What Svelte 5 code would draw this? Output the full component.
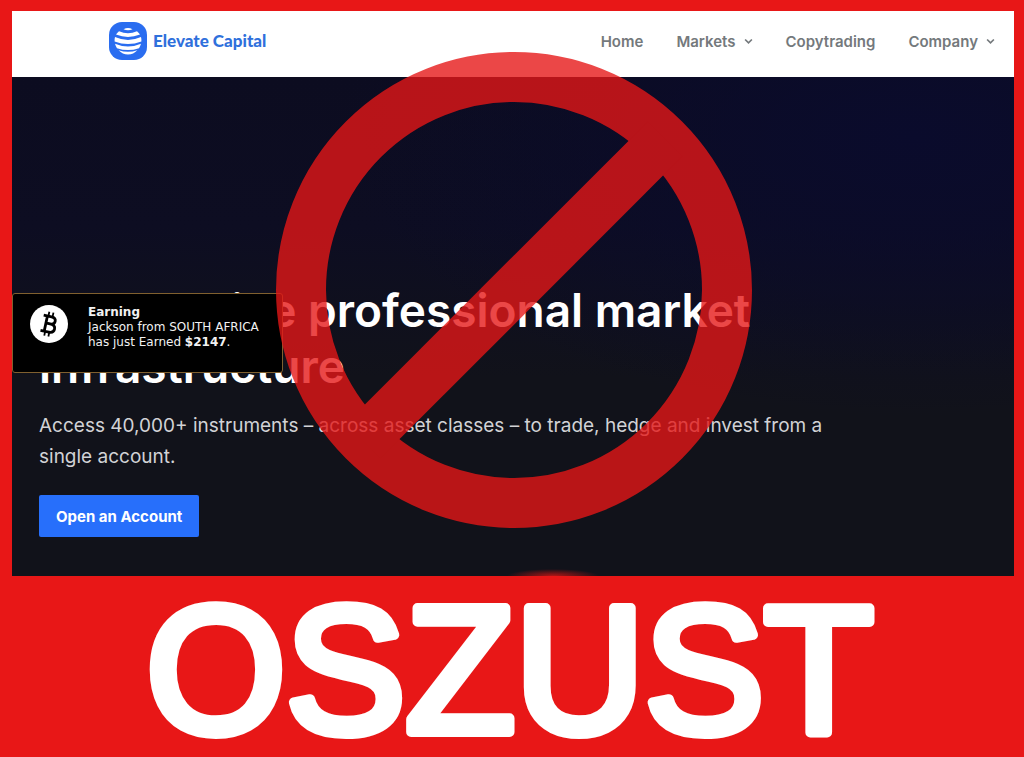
<script lang="ts">
    interface NavItem {
        label: string;
        menu: boolean;
    }

    const navItems: NavItem[] = [
        {label: 'Home', menu: false},
        {label: 'Markets', menu: true},
        {label: 'Copytrading', menu: false},
        {label: 'Company', menu: true}
    ];

    const earning = {name: 'Jackson', country: 'SOUTH AFRICA', amount: '$2147'};
</script>

<main class="poster">
    <div class="site">
        <header>
            <a class="brand" href="#home">
                <svg class="logo" viewBox="0 0 38 38" aria-hidden="true">
                    <rect width="38" height="38" rx="13" fill="#2a6df0"/>
                    <g fill="#fff">
                        <path d="M14.5 7.2 Q19 4.8 23.5 7.2 Q19 9.4 14.5 7.2Z"/>
                        <path d="M10 9.2 Q19 13.4 28 9.2 Q30 10.8 31 12.6 Q19 17.4 7 12.6 Q8 10.8 10 9.2Z"/>
                        <path d="M6 15 Q19 20.8 32 15 Q32.6 17 32.4 19.4 Q19 24.6 5.6 19.4 Q5.4 17 6 15Z"/>
                        <path d="M6 21.8 Q19 27.4 32 21.8 Q31.2 24.6 30 26.2 Q19 30 8 26.2 Q6.8 24.6 6 21.8Z"/>
                        <path d="M9.6 28.2 Q19 31.4 28.4 28.2 Q24.5 32.4 19 32.4 Q13.5 32.4 9.6 28.2Z"/>
                    </g>
                </svg>
                <span>Elevate Capital</span>
            </a>
            <nav>
                {#each navItems as item}
                    <a href="#{item.label.toLowerCase()}">
                        {item.label}
                        {#if item.menu}
                            <svg class="chevron" viewBox="0 0 8 6" aria-hidden="true">
                                <path d="M1 1.2 L4 4.2 L7 1.2" fill="none" stroke="currentColor" stroke-width="1.5"/>
                            </svg>
                        {/if}
                    </a>
                {/each}
            </nav>
        </header>

        <section class="hero">
            <h1>Responsive professional market infrastructure</h1>
            <p>Access 40,000+ instruments – across asset classes – to trade, hedge and invest from a single account.</p>
            <button type="button">Open an Account</button>
        </section>

        <aside class="toast">
            <svg class="coin" viewBox="0 0 38 38" aria-hidden="true">
                <circle cx="19" cy="19" r="19" fill="#fff"/>
                <g transform="rotate(12 19 19)" fill="none" stroke="#000">
                    <path d="M12 11.5 H20 Q24.5 11.5 24.5 15.1 Q24.5 18.7 20 18.7 H15.5 M20 18.7 Q25.5 18.7 25.5 22.8 Q25.5 27 20.5 27 H12 M15.8 11.5 V27" stroke-width="2.8"/>
                    <path d="M16.8 7 V12 M21 7 V12 M16.8 26.4 V31.4 M21 26.4 V31.4" stroke-width="1.8"/>
                </g>
            </svg>
            <div>
                <strong>Earning</strong><br>
                {earning.name} from {earning.country}<br>
                has just Earned <strong>{earning.amount}</strong>.
            </div>
        </aside>

        <svg class="ban" viewBox="0 0 476 476" aria-hidden="true">
            <g fill="none" stroke="#e61717">
                <circle cx="238" cy="238" r="213" stroke-width="50"/>
                <path d="M87 389 L389 87" stroke-width="49"/>
            </g>
        </svg>
    </div>

    <h2>
        <svg viewBox="0 0 1000 181">
            <text x="497" y="156" text-anchor="middle">OSZUST</text>
        </svg>
    </h2>
</main>

<style>
    :global(body) {
        margin: 0;
        background: #e81717;
    }

    .poster {
        box-sizing: border-box;
        min-height: 100vh;
        padding: 11px 10px 0 12px;
        background: #e81717;
        font-family: Inter, "Liberation Sans", sans-serif;
    }

    .site {
        position: relative;
    }

    header {
        display: flex;
        align-items: center;
        justify-content: space-between;
        box-sizing: border-box;
        min-height: 66px;
        padding: 0 19px 6px 97px;
        background: #fff;
    }

    a {
        text-decoration: none;
    }

    .brand {
        display: flex;
        align-items: center;
        gap: 6px;
        color: #2f70dc;
        font-family: Lato, sans-serif;
        font-size: 17px;
        font-weight: 900;
        line-height: 16px;
    }

    .logo {
        width: 38px;
        height: 38px;
    }

    nav {
        display: flex;
        gap: 33px;
    }

    nav a {
        display: flex;
        align-items: center;
        gap: 8px;
        color: #74797c;
        font-size: 15px;
        font-weight: 600;
    }

    .chevron {
        width: 9px;
        height: 7px;
    }

    .hero {
        display: flex;
        flex-direction: column;
        align-items: flex-start;
        justify-content: flex-end;
        box-sizing: border-box;
        min-height: 499px;
        padding: 0 27px 39px;
        background: radial-gradient(ellipse 46px 7px at 54% 100%, #b01515 0%, transparent 100%),
        radial-gradient(ellipse at 90% 12%, #0a0b2c 0%, transparent 45%),
        linear-gradient(#0c0c20 0%, #0d0d22 30%, #11121a 60%, #11121a 100%);
        color: #fff;
    }

    h1 {
        max-width: 800px;
        margin: 0;
        font-size: 46px;
        font-weight: 600;
        line-height: 56px;
    }

    p {
        max-width: 800px;
        margin: 16px 0 23px;
        color: #d2d2d6;
        font-size: 19px;
        font-weight: 400;
        line-height: 31px;
    }

    button {
        height: 42px;
        padding: 0 17px;
        border: 0;
        border-radius: 2px;
        background: #276ffb;
        color: #fff;
        font-family: inherit;
        font-size: 15px;
        font-weight: 700;
    }

    .toast {
        position: absolute;
        top: 282px;
        left: 0;
        display: flex;
        gap: 20px;
        box-sizing: border-box;
        width: 271px;
        height: 80px;
        padding: 11px 17px;
        border: 1px solid #80602f;
        border-radius: 3px;
        background: #000;
        color: #f2f2f2;
        font-family: "DejaVu Sans", sans-serif;
        font-size: 12px;
        line-height: 15px;
        white-space: nowrap;
    }

    .coin {
        flex: none;
        width: 38px;
        height: 38px;
    }

    .ban {
        position: absolute;
        top: 41px;
        left: 50%;
        width: 476px;
        height: 476px;
        margin-left: -237px;
        opacity: 0.79;
    }

    h2 {
        margin: 0;
    }

    h2 svg {
        display: block;
        width: 100%;
        overflow: visible;
    }

    text {
        fill: #fff;
        stroke: #fff;
        stroke-width: 10px;
        stroke-linejoin: round;
        font-family: "Liberation Sans", sans-serif;
        font-size: 179px;
        font-weight: 400;
    }
</style>
